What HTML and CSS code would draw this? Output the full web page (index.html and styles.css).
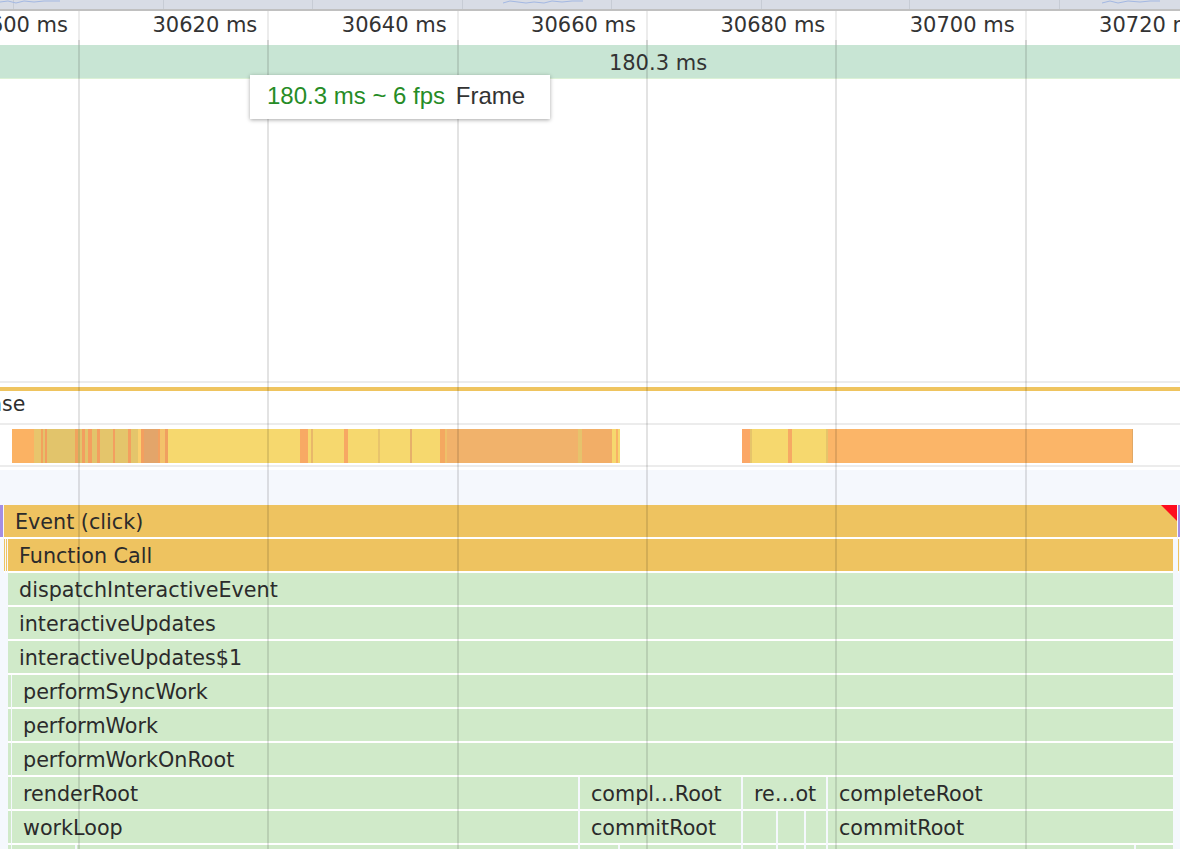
FILE: index.html
```html
<!DOCTYPE html>
<html>
<head>
<meta charset="utf-8">
<link rel="stylesheet" href="styles.css">
</head>
<body>
<div class="page">
  <div class="overview">
    <svg width="1180" height="9" viewBox="0 0 1180 9">
      <g class="ov-sep">
        <line x1="13.5" y1="0" x2="13.5" y2="9"/>
        <line x1="163.5" y1="0" x2="163.5" y2="9"/>
        <line x1="312.5" y1="0" x2="312.5" y2="9"/>
        <line x1="462.5" y1="0" x2="462.5" y2="9"/>
        <line x1="611.5" y1="0" x2="611.5" y2="9"/>
        <line x1="761.5" y1="0" x2="761.5" y2="9"/>
        <line x1="909.5" y1="0" x2="909.5" y2="9"/>
        <line x1="1059.5" y1="0" x2="1059.5" y2="9"/>
      </g>
      <g class="ov-line">
        <polyline points="0,2 8,1 16,3 24,1 34,2 44,1 60,1"/>
        <polyline points="503,3 510,1 518,2 526,3 534,2 544,3 552,1 562,2 572,1 583,1"/>
        <polyline points="1102,3 1110,1 1118,3 1128,1 1140,2 1150,1 1160,1"/>
      </g>
    </svg>
  </div>

  <div class="ruler">
    <div class="tick">30600 ms</div>
    <div class="tick">30620 ms</div>
    <div class="tick">30640 ms</div>
    <div class="tick">30660 ms</div>
    <div class="tick">30680 ms</div>
    <div class="tick">30700 ms</div>
    <div class="tick">30720 ms</div>
  </div>

  <div class="frames">180.3 ms</div>

  <div class="main-empty"></div>

  <div class="track-sep"></div>
  <div class="track-accent"></div>
  <div class="track-label"><span>ase</span></div>
  <div class="track-sep"></div>

  <div class="activity">
    <div class="act act-a"></div>
    <div class="act act-b"></div>
  </div>
  <div class="track-sep low"></div>

  <div class="flame">
    <div class="row">
      <div class="bar pur" style="width:3px"></div>
      <div class="bar evt warn" style="margin-left:1px;width:1173px">Event (click)</div>
      <div class="bar pur" style="margin-left:1px;width:2px"></div>
    </div>
    <div class="row">
      <div class="bar evt" style="margin-left:4px;width:1px"></div>
      <div class="bar evt" style="margin-left:1px;width:1px"></div>
      <div class="bar evt" style="margin-left:1px;width:1165px">Function Call</div>
      <div class="bar evt" style="margin-left:5px;width:1px"></div>
    </div>
    <div class="row">
      <div class="bar fn" style="margin-left:8px;width:1165px">dispatchInteractiveEvent</div>
    </div>
    <div class="row">
      <div class="bar fn" style="margin-left:8px;width:1165px">interactiveUpdates</div>
    </div>
    <div class="row">
      <div class="bar fn" style="margin-left:8px;width:1165px">interactiveUpdates$1</div>
    </div>
    <div class="row">
      <div class="bar fn" style="margin-left:8px;width:3px"></div>
      <div class="bar fn" style="margin-left:1px;width:1161px">performSyncWork</div>
    </div>
    <div class="row">
      <div class="bar fn" style="margin-left:8px;width:3px"></div>
      <div class="bar fn" style="margin-left:1px;width:1161px">performWork</div>
    </div>
    <div class="row">
      <div class="bar fn" style="margin-left:8px;width:3px"></div>
      <div class="bar fn" style="margin-left:1px;width:1161px">performWorkOnRoot</div>
    </div>
    <div class="row">
      <div class="bar fn" style="margin-left:8px;width:3px"></div>
      <div class="bar fn" style="margin-left:1px;width:566px">renderRoot</div>
      <div class="bar fn" style="margin-left:2px;width:161px">compl…Root</div>
      <div class="bar fn" style="margin-left:2px;width:83px">re…ot</div>
      <div class="bar fn" style="margin-left:2px;width:345px">completeRoot</div>
    </div>
    <div class="row">
      <div class="bar fn" style="margin-left:8px;width:3px"></div>
      <div class="bar fn" style="margin-left:1px;width:566px">workLoop</div>
      <div class="bar fn" style="margin-left:2px;width:161px">commitRoot</div>
      <div class="bar fn" style="margin-left:2px;width:33px"></div>
      <div class="bar fn" style="margin-left:2px;width:26px"></div>
      <div class="bar fn" style="margin-left:2px;width:20px"></div>
      <div class="bar fn" style="margin-left:2px;width:345px">commitRoot</div>
    </div>
    <div class="row">
      <div class="bar fn" style="margin-left:8px;width:3px"></div>
      <div class="bar fn" style="margin-left:1px;width:63px"></div>
      <div class="bar fn" style="margin-left:2px;width:501px"></div>
      <div class="bar fn" style="margin-left:2px;width:38px"></div>
      <div class="bar fn" style="margin-left:2px;width:121px"></div>
      <div class="bar fn" style="margin-left:2px;width:33px"></div>
      <div class="bar fn" style="margin-left:2px;width:26px"></div>
      <div class="bar fn" style="margin-left:2px;width:20px"></div>
      <div class="bar fn" style="margin-left:2px;width:306px"></div>
      <div class="bar fn" style="margin-left:2px;width:37px"></div>
    </div>
  </div>

  <div class="grid">
    <i></i><i></i><i></i><i></i><i></i><i></i>
  </div>

  <div class="tooltip"><span class="fps">180.3 ms ~ 6 fps</span> <span class="kind">Frame</span></div>
</div>
</body>
</html>
```

FILE: styles.css
```css
html, body {
  margin: 0;
  padding: 0;
}

body {
  width: 1180px;
  height: 849px;
  overflow: hidden;
  background: #ffffff;
  font-family: "DejaVu Sans", "Noto Sans", sans-serif;
  color: #2e2e2e;
}

.page {
  position: relative;
  width: 1180px;
  height: 849px;
  overflow: hidden;
}

/* overview strip */
.overview {
  height: 9px;
  background: #d8dce5;
  border-bottom: 2px solid #c0c0c0;
}

.overview svg {
  display: block;
}

.ov-sep line {
  stroke: #c7ccd5;
  stroke-width: 1;
}

.ov-line polyline {
  fill: none;
  stroke: #a3b8e3;
  stroke-width: 1;
}

/* time ruler */
.ruler {
  display: flex;
  height: 34px;
  margin-left: -109.33px;
}

.tick {
  flex: 0 0 189.33px;
  box-sizing: border-box;
  border-right: 2px solid #ececec;
  text-align: right;
  padding-right: 10px;
  padding-top: 2px;
  font-size: 21px;
  line-height: 24px;
  white-space: nowrap;
  color: #333333;
}

/* frames track */
.frames {
  height: 29px;
  padding-top: 4px;
  line-height: 29px;
  background: #c8e5d4;
  border-bottom: 1px solid #dcf1d6;
  font-size: 21px;
  text-align: center;
  padding-left: 136px;
  color: #333333;
}

.main-empty {
  height: 302px;
}

.track-sep {
  height: 2px;
  background: #ececec;
  margin-bottom: 4px;
}

.track-sep.low {
  margin-top: 2px;
  margin-bottom: 3px;
}

.track-accent {
  height: 4px;
  background: #efc45f;
}

.track-label {
  height: 32px;
  line-height: 26px;
  font-size: 20.5px;
  white-space: nowrap;
  overflow: hidden;
}

.track-label span {
  display: inline-block;
  margin-left: -10.6px;
}

/* activity strip */
.activity {
  display: flex;
  height: 34px;
  padding-left: 12px;
}

.act {
  flex: none;
  height: 34px;
}

.act-a {
  width: 608px;
  background: linear-gradient(to right,
    #fbb263 0 22px, #e8c56c 22px 29px, #f2a35c 29px 31px, #e2c46b 31px 33px,
    #f39e5e 33px 35px, #e2c46b 35px 63px, #f0a35e 63px 66px, #e2c46b 66px 70px,
    #f39f5f 70px 73px, #e2c46b 73px 76px, #f49f5f 76px 80px, #e2c46b 80px 85px,
    #f39f5f 85px 88px, #e4c56b 88px 101px, #f39f5f 101px 103px, #e4c56b 103px 116px,
    #f39f5f 116px 119px, #e4c56b 119px 126px, #fbd06e 126px 129px, #f39f5f 129px 132px,
    #e3a56a 132px 146px, #f39f5f 146px 148px, #f3c26a 148px 153px, #f0a060 153px 156px,
    #f6d86e 156px 288px, #f8a964 288px 296px, #f6d86e 296px 299px, #e8b86a 299px 301px,
    #f6d86e 301px 332px, #f7a863 332px 336px, #f6d86e 336px 366px, #e8c46c 366px 368px,
    #f6d86e 368px 398px, #e6b06a 398px 400px, #f6d86e 400px 428px, #f4a860 428px 433px,
    #eec06a 433px 435px, #f1b26b 435px 566px, #e6c36c 566px 570px, #f2ae67 570px 600px,
    #f6d86e 600px 604px, #f8b266 604px 606px, #f6d86e 606px 608px);
}

.act-b {
  width: 391px;
  margin-left: 122px;
  background: linear-gradient(to right,
    #fba766 0 8px, #e6c46a 8px 10px, #f6d86e 10px 46px, #f6a964 46px 50px,
    #f6d86e 50px 84px, #e6c46a 84px 86px, #fbb568 86px 390px, #e0a866 390px 391px);
}

/* flame chart */
.flame {
  background: #f5f8fd;
  padding-top: 35px;
  height: 400px;
}

.row {
  display: flex;
  height: 34px;
}

.bar {
  flex: none;
  position: relative;
  box-sizing: border-box;
  height: 34px;
  padding-top: 1px;
  border-bottom: 2px solid #ffffff;
  line-height: 32px;
  font-size: 20.7px;
  text-indent: 11px;
  white-space: nowrap;
  overflow: hidden;
  color: #2b2b2b;
}

.bar.evt {
  background: #eec360;
}

.bar.fn {
  background: #d0eac9;
}

.bar.pur {
  background: #a48ee2;
}

.bar.warn::after {
  content: "";
  position: absolute;
  top: 0;
  right: 0;
  width: 16px;
  height: 16px;
  background: #fe0c1f;
  clip-path: polygon(0 0, 100% 0, 100% 100%);
}

/* grid overlay */
.grid {
  position: absolute;
  top: 40px;
  bottom: 0;
  left: 0;
  right: 0;
  display: flex;
  padding-left: 78px;
  gap: 187.33px;
  pointer-events: none;
}

.grid i {
  flex: none;
  width: 2px;
  background: rgba(0, 0, 0, 0.11);
}

/* tooltip */
.tooltip {
  position: absolute;
  left: 250px;
  top: 75px;
  width: 300px;
  height: 44px;
  box-sizing: border-box;
  padding-left: 17px;
  line-height: 42px;
  background: #ffffff;
  box-shadow: 0 1px 4px rgba(0, 0, 0, 0.35);
  font-family: "Liberation Sans", Arial, sans-serif;
  font-size: 24px;
  white-space: nowrap;
}

.tooltip .fps {
  color: #268c26;
}

.tooltip .kind {
  color: #333333;
  margin-left: 4px;
}
```
